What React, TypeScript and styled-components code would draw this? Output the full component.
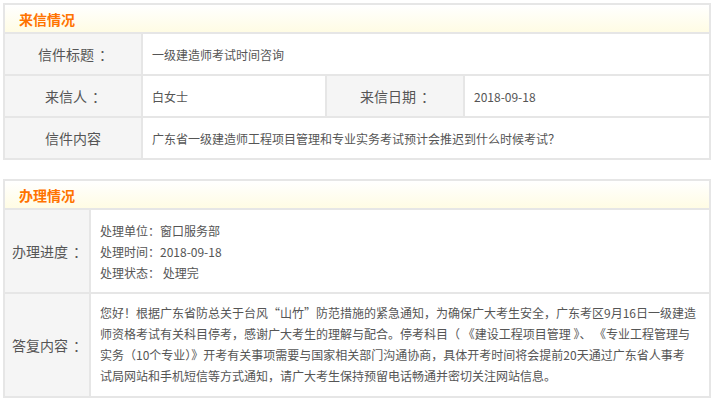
import React from "react";
import styled, { createGlobalStyle } from "styled-components";

const GlobalStyle = createGlobalStyle`
  html, body { margin: 0; padding: 0; background: #ffffff; }
  body {
    font-family: "Microsoft YaHei", "Noto Sans CJK SC", "Noto Sans", sans-serif;
    color: #555555;
  }
`;

const Page = styled.div`
  padding: 3px 5px 3px 3px;
  display: flex;
  flex-direction: column;
  gap: 19px;
`;

const Panel = styled.section`
  border: 2px solid #e6e6e6;
  background: #e6e6e6;
  display: flex;
  flex-direction: column;
  gap: 2px;
`;

const Header = styled.h2`
  margin: 0;
  height: 27px;
  display: flex;
  align-items: center;
  padding-left: 14px;
  font-size: 14px;
  font-weight: bold;
  color: #ff7300;
  background: linear-gradient(to bottom, #ffffff 0%, #fffce4 100%);
`;

const Grid = styled.div<{ $cols: string; $rows: string }>`
  display: grid;
  grid-template-columns: ${(p) => p.$cols};
  grid-template-rows: ${(p) => p.$rows};
  gap: 2px;
`;

const Label = styled.div`
  background: #f5f5f5;
  display: flex;
  align-items: center;
  justify-content: center;
  font-size: 14px;
  color: #555555;
`;

const Colon = styled.span`
  display: inline-block;
  width: 14px;
  text-indent: 5px;
  white-space: nowrap;
`;

const Value = styled.div<{ $span?: number }>`
  background: #ffffff;
  display: flex;
  align-items: center;
  padding: 0 9px;
  font-size: 12px;
  color: #555555;
  grid-column: span ${(p) => p.$span ?? 1};
`;

const Block = styled.div<{ $pad: string }>`
  background: #ffffff;
  padding: ${(p) => p.$pad};
  font-size: 12px;
  line-height: 21px;
  color: #555555;
`;

const Line = styled.div`
  white-space: nowrap;
`;

const answerLines = [
  "您好！根据广东省防总关于台风“山竹”防范措施的紧急通知，为确保广大考生安全，广东考区9月16日一级建造",
  "师资格考试有关科目停考，感谢广大考生的理解与配合。停考科目（ 《建设工程项目管理 》、 《专业工程管理与",
  "实务（10个专业）》开考有关事项需要与国家相关部门沟通协商，具体开考时间将会提前20天通过广东省人事考",
  "试局网站和手机短信等方式通知，请广大考生保持预留电话畅通并密切关注网站信息。",
];

export default function App() {
  return (
    <>
      <GlobalStyle />
      <Page lang="zh-CN">
        <Panel>
          <Header>来信情况</Header>
          <Grid $cols="136px 182px 136px 1fr" $rows="40px 40px 40px">
            <Label>信件标题<Colon>：</Colon></Label>
            <Value $span={3}>一级建造师考试时间咨询</Value>
            <Label>来信人<Colon>：</Colon></Label>
            <Value>白女士</Value>
            <Label>来信日期<Colon>：</Colon></Label>
            <Value>2018-09-18</Value>
            <Label>信件内容</Label>
            <Value $span={3}>广东省一级建造师工程项目管理和专业实务考试预计会推迟到什么时候考试？</Value>
          </Grid>
        </Panel>
        <Panel>
          <Header>办理情况</Header>
          <Grid $cols="84px 1fr" $rows="auto auto">
            <Label>办理进度<Colon>：</Colon></Label>
            <Block $pad="10px 9px 9px">
              <Line>处理单位：窗口服务部</Line>
              <Line>处理时间：2018-09-18</Line>
              <Line>处理状态： 处理完</Line>
            </Block>
            <Label>答复内容<Colon>：</Colon></Label>
            <Block $pad="8px 9px 10px">
              {answerLines.map((t) => (
                <Line key={t}>{t}</Line>
              ))}
            </Block>
          </Grid>
        </Panel>
      </Page>
    </>
  );
}
